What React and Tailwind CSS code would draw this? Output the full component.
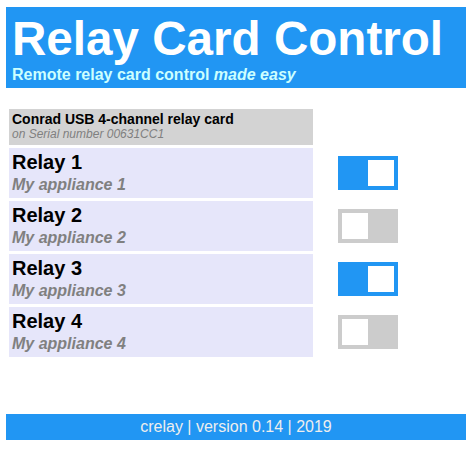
import React from "react";

const relays = [
  { n: 1, on: true },
  { n: 2, on: false },
  { n: 3, on: true },
  { n: 4, on: false },
];

function Toggle({ on }) {
  return (
    <div
      className={
        "ml-[25px] w-[60px] h-[34px] p-[4px] flex " +
        (on ? "bg-[#2196f3] justify-end" : "bg-[#cccccc] justify-start")
      }
    >
      <div className="w-[26px] h-[26px] bg-white" />
    </div>
  );
}

export default function App() {
  return (
    <div
      className="w-[473px] h-[450px] bg-white px-[6px] pt-[7px]"
      style={{ fontFamily: '"Liberation Sans", Arial, sans-serif' }}
    >
      <div className="w-[460px] h-[81px] bg-[#2196f3] pt-[4px] pb-[4px] pl-[6px]">
        <div className="text-[47.6px] leading-[55px] font-bold text-white whitespace-nowrap">
          Relay Card Control
        </div>
        <div className="text-[16px] leading-[18px] font-bold text-[#ccffff] whitespace-nowrap">
          Remote relay card control <i>made easy</i>
        </div>
      </div>

      <div className="mt-[21px] ml-[3px] flex flex-col gap-[3px]">
        <div className="w-[304px] h-[36px] bg-[#d3d3d3] pl-[3px] pt-[2px]">
          <div className="text-[14px] leading-[16px] font-bold text-black whitespace-nowrap">
            Conrad USB 4-channel relay card
          </div>
          <div className="text-[12px] leading-[15px] italic text-[#808080] whitespace-nowrap">
            on Serial number 00631CC1
          </div>
        </div>
        {relays.map((r) => (
          <div key={r.n} className="flex items-center">
            <div className="w-[304px] h-[50px] bg-[#e6e6fa] pl-[3px] pt-[2px]">
              <div className="text-[20px] leading-[24px] font-bold text-black whitespace-nowrap">
                Relay {r.n}
              </div>
              <div className="text-[16px] leading-[22px] font-bold italic text-[#808080] whitespace-nowrap">
                My appliance {r.n}
              </div>
            </div>
            <Toggle on={r.on} />
          </div>
        ))}
      </div>

      <div className="mt-[57px] w-[460px] h-[26px] bg-[#2196f3] flex items-center justify-center text-[16px] text-[#eeeeee]">
        crelay | version 0.14 | 2019
      </div>
    </div>
  );
}
